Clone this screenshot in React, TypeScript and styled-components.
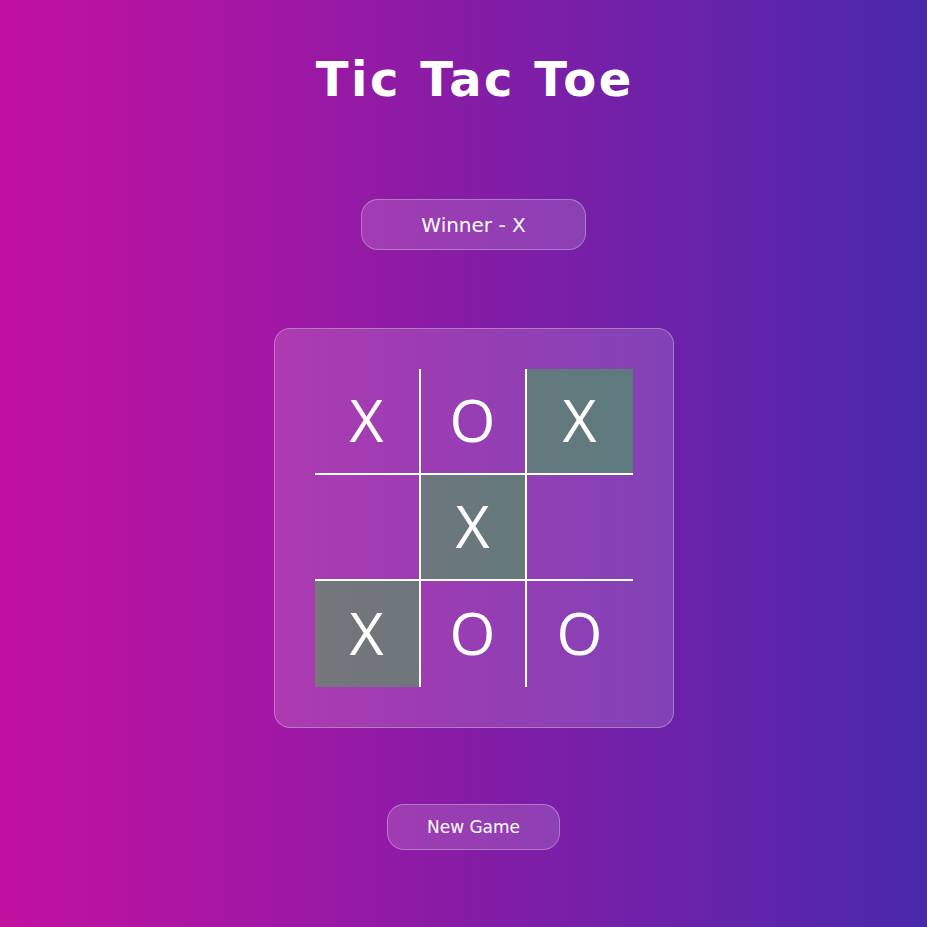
import React, { useState } from "react";
import styled, { createGlobalStyle } from "styled-components";

const GlobalStyle = createGlobalStyle`
  html, body {
    margin: 0;
    padding: 0;
  }
  body {
    min-height: 100vh;
    background: linear-gradient(90deg, #c311a0, #4a28ac);
    font-family: "DejaVu Sans", "Noto Sans", sans-serif;
    color: #ffffff;
  }
`;

// style
const Wrapper = styled.main`
  display: flex;
  flex-direction: column;
  align-items: center;
  min-height: 100vh;
  padding-left: 20px;
  box-sizing: border-box;
`;

const Title = styled.h1`
  margin: 51px 0 0;
  padding-left: 2.5px;
  font-size: 48px;
  line-height: 56px;
  font-weight: 700;
  letter-spacing: 2.5px;
  color: #ffffff;
`;

const Pill = styled.div<{ $w: number; $h: number }>`
  display: flex;
  justify-content: center;
  align-items: center;
  box-sizing: border-box;
  width: ${(p) => p.$w}px;
  height: ${(p) => p.$h}px;
  background: rgba(255, 255, 255, 0.15);
  border: 1px solid rgba(255, 255, 255, 0.3);
  border-radius: 17px;
  color: #ffffff;
`;

const Status = styled(Pill)`
  margin-top: 92px;
  font-size: 20px;
`;

const NewGame = styled(Pill).attrs({ as: "button" })`
  margin-top: 76px;
  font-family: inherit;
  font-size: 17px;
  cursor: pointer;
`;

const Board = styled.div`
  margin-top: 78px;
  padding: 40px;
  background: rgba(255, 255, 255, 0.15);
  border: 1px solid rgba(255, 255, 255, 0.3);
  border-radius: 16px;
`;

const Grid = styled.div`
  display: grid;
  grid-template-columns: repeat(3, 106px);
  grid-template-rows: repeat(3, 106px);
`;

const Cell = styled.div<{ $right: boolean; $bottom: boolean; $win: boolean }>`
  display: flex;
  justify-content: center;
  align-items: center;
  box-sizing: border-box;
  padding-bottom: 4px;
  border-right: ${(p) => (p.$right ? "2px solid #ffffff" : "none")};
  border-bottom: ${(p) => (p.$bottom ? "2px solid #ffffff" : "none")};
  background: ${(p) => (p.$win ? "rgba(0, 255, 0, 0.3)" : "transparent")};
  font-family: "Open Sans", "DejaVu Sans", sans-serif;
  font-size: 59px;
  font-weight: 400;
  color: #ffffff;
  cursor: pointer;
`;

const start = ["X", "O", "X", "", "X", "", "X", "O", "O"];
const winLine = [2, 4, 6];

// render
function App() {
  const [squares, setSquares] = useState<string[]>(start);
  const reset = () => setSquares(Array(9).fill(""));
  const won = squares.join("") === start.join("");
  return (
    <>
      <GlobalStyle />
      <Wrapper>
        <Title>Tic Tac Toe</Title>
        <Status $w={225} $h={51}>
          {won ? "Winner - X" : "Next - X"}
        </Status>
        <Board>
          <Grid>
            {squares.map((s, i) => (
              <Cell
                key={i}
                $right={i % 3 !== 2}
                $bottom={i < 6}
                $win={won && winLine.includes(i)}
              >
                {s}
              </Cell>
            ))}
          </Grid>
        </Board>
        <NewGame $w={173} $h={46} onClick={reset}>
          New Game
        </NewGame>
      </Wrapper>
    </>
  );
}

export default App;
